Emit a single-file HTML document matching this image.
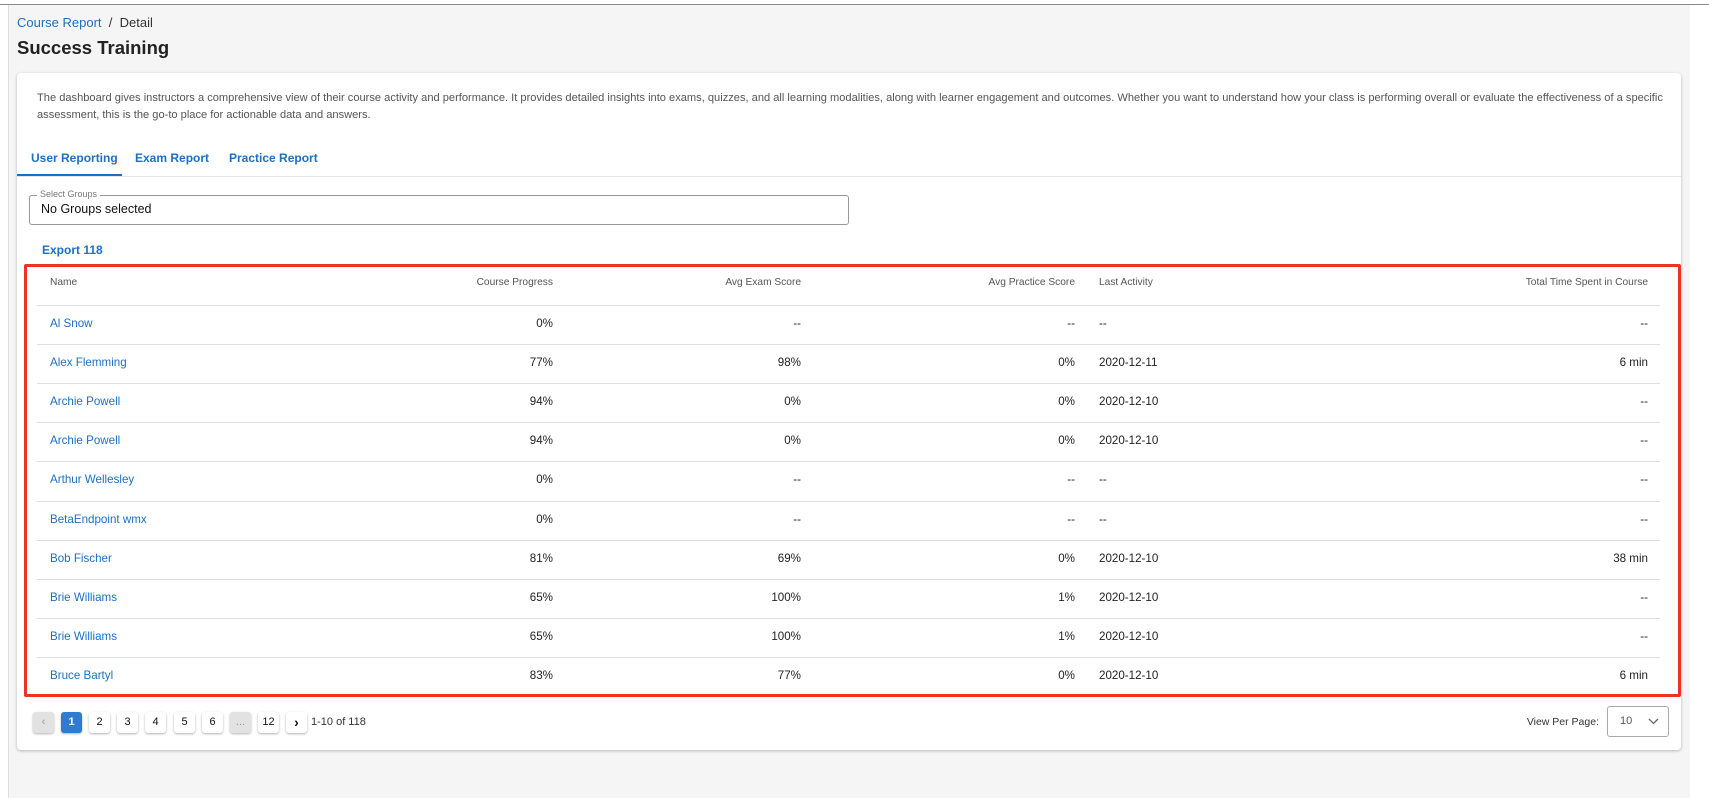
<!DOCTYPE html>
<html><head><meta charset="utf-8"><style>
*{box-sizing:border-box;margin:0;padding:0}
body{width:1709px;height:798px;overflow:hidden;background:#fff;font-family:"Liberation Sans",sans-serif;position:relative}
.abs{position:absolute}
.blue{color:#1d6fc5}
.topline{left:0;top:4px;width:1709px;height:1px;background:#8a8a8a}
.bg{left:8px;top:5px;width:1682px;height:793px;background:#f5f5f5;border-left:1px solid #ddd}
.card{left:17px;top:73px;width:1664px;height:677px;background:#fff;border-radius:4px;box-shadow:0 1px 3px rgba(0,0,0,.25)}
.th{font-size:10.2px;color:#555;top:277px}
.td{font-size:11.6px;color:#222}
.r{text-align:right}
.hl{left:37px;width:1623px;height:1px;background:#e0e0e0}
.pg{top:712px;width:21px;height:21px;background:#fff;border-radius:3px;box-shadow:0 1px 2px rgba(0,0,0,.3);font-size:11px;text-align:center;line-height:21px;color:#111}
</style></head><body>
<div class="abs topline"></div>
<div class="abs bg"></div>
<div class="abs" style="left:17px;top:15px;font-size:13px;color:#333"><span class="blue">Course Report</span> &nbsp;/&nbsp; Detail</div>
<div class="abs" style="left:17px;top:37px;font-size:18.5px;font-weight:bold;color:#222">Success Training</div>
<div class="abs card"></div>
<div class="abs" style="left:37px;top:90px;width:1630px;font-size:11.1px;line-height:16.5px;color:#555">The dashboard gives instructors a comprehensive view of their course activity and performance. It provides detailed insights into exams, quizzes, and all learning modalities, along with learner engagement and outcomes. Whether you want to understand how your class is performing overall or evaluate the effectiveness of a specific assessment, this is the go-to place for actionable data and answers.</div>
<div class="abs blue" style="left:31px;top:151px;font-size:12px;font-weight:bold">User Reporting</div>
<div class="abs blue" style="left:135px;top:151px;font-size:12px;font-weight:bold">Exam Report</div>
<div class="abs blue" style="left:229px;top:151px;font-size:12px;font-weight:bold">Practice Report</div>
<div class="abs" style="left:17px;top:176px;width:1664px;height:1px;background:#e6e6e6"></div>
<div class="abs" style="left:17px;top:174px;width:105px;height:2px;background:#1d6fc5"></div>
<div class="abs" style="left:29px;top:195px;width:820px;height:30px;border:1px solid #999;border-radius:3px"></div>
<div class="abs" style="left:37px;top:189px;font-size:9px;color:#777;background:#fff;padding:0 3px">Select Groups</div>
<div class="abs" style="left:41px;top:202px;font-size:12.5px;color:#111">No Groups selected</div>
<div class="abs blue" style="left:42px;top:243px;font-size:12px;font-weight:bold">Export 118</div>
<div class="abs" style="left:24px;top:264px;width:1657px;height:433px;border:3px solid #ee3228;border-radius:2px"></div>
<div class="abs th" style="left:50px">Name</div>
<div class="abs th r" style="left:353px;width:200px">Course Progress</div>
<div class="abs th r" style="left:601px;width:200px">Avg Exam Score</div>
<div class="abs th r" style="left:875px;width:200px">Avg Practice Score</div>
<div class="abs th" style="left:1099px">Last Activity</div>
<div class="abs th r" style="left:1348px;width:300px">Total Time Spent in Course</div>
<div id="rows"></div>
<script>
var d=[["Al Snow","0%","--","--","--","--"],["Alex Flemming","77%","98%","0%","2020-12-11","6 min"],["Archie Powell","94%","0%","0%","2020-12-10","--"],["Archie Powell","94%","0%","0%","2020-12-10","--"],["Arthur Wellesley","0%","--","--","--","--"],["BetaEndpoint wmx","0%","--","--","--","--"],["Bob Fischer","81%","69%","0%","2020-12-10","38 min"],["Brie Williams","65%","100%","1%","2020-12-10","--"],["Brie Williams","65%","100%","1%","2020-12-10","--"],["Bruce Bartyl","83%","77%","0%","2020-12-10","6 min"]];
var h='';
for(var i=0;i<10;i++){var y=305+i*39.1,t=y+12;var r=d[i];
h+='<div class="abs hl" style="top:'+y+'px"></div>';
h+='<div class="abs td blue" style="left:50px;top:'+t+'px;color:#1d6fc5">'+r[0]+'</div>';
h+='<div class="abs td r" style="left:353px;width:200px;top:'+t+'px">'+r[1]+'</div>';
h+='<div class="abs td r" style="left:601px;width:200px;top:'+t+'px">'+r[2]+'</div>';
h+='<div class="abs td r" style="left:875px;width:200px;top:'+t+'px">'+r[3]+'</div>';
h+='<div class="abs td" style="left:1099px;top:'+t+'px">'+r[4]+'</div>';
h+='<div class="abs td r" style="left:1448px;width:200px;top:'+t+'px">'+r[5]+'</div>';}
document.getElementById('rows').innerHTML=h;
</script>
<div class="abs pg" style="left:33px;background:#e2e2e2;color:#999">&#8249;</div>
<div class="abs pg" style="left:61px;background:#2f7bd0;color:#fff;font-weight:bold">1</div>
<div class="abs pg" style="left:89px">2</div>
<div class="abs pg" style="left:117px">3</div>
<div class="abs pg" style="left:145px">4</div>
<div class="abs pg" style="left:174px">5</div>
<div class="abs pg" style="left:202px">6</div>
<div class="abs pg" style="left:230px;background:#e2e2e2;color:#999">...</div>
<div class="abs pg" style="left:258px">12</div>
<div class="abs pg" style="left:286px;font-weight:bold;font-size:14px">&#8250;</div>
<div class="abs" style="left:311px;top:716px;font-size:11px;color:#333">1-10 of 118</div>
<div class="abs" style="left:1499px;top:716px;width:100px;text-align:right;font-size:10.5px;color:#333">View Per Page:</div>
<div class="abs" style="left:1607px;top:706px;width:62px;height:31px;border:1px solid #aaa;border-radius:3px;font-size:11px;color:#555;padding:8px 0 0 12px">10
<svg class="abs" style="left:40px;top:11px" width="11" height="7" viewBox="0 0 11 7"><path d="M1 1l4.5 4.5L10 1" fill="none" stroke="#666" stroke-width="1.3"/></svg></div>
</body></html>
